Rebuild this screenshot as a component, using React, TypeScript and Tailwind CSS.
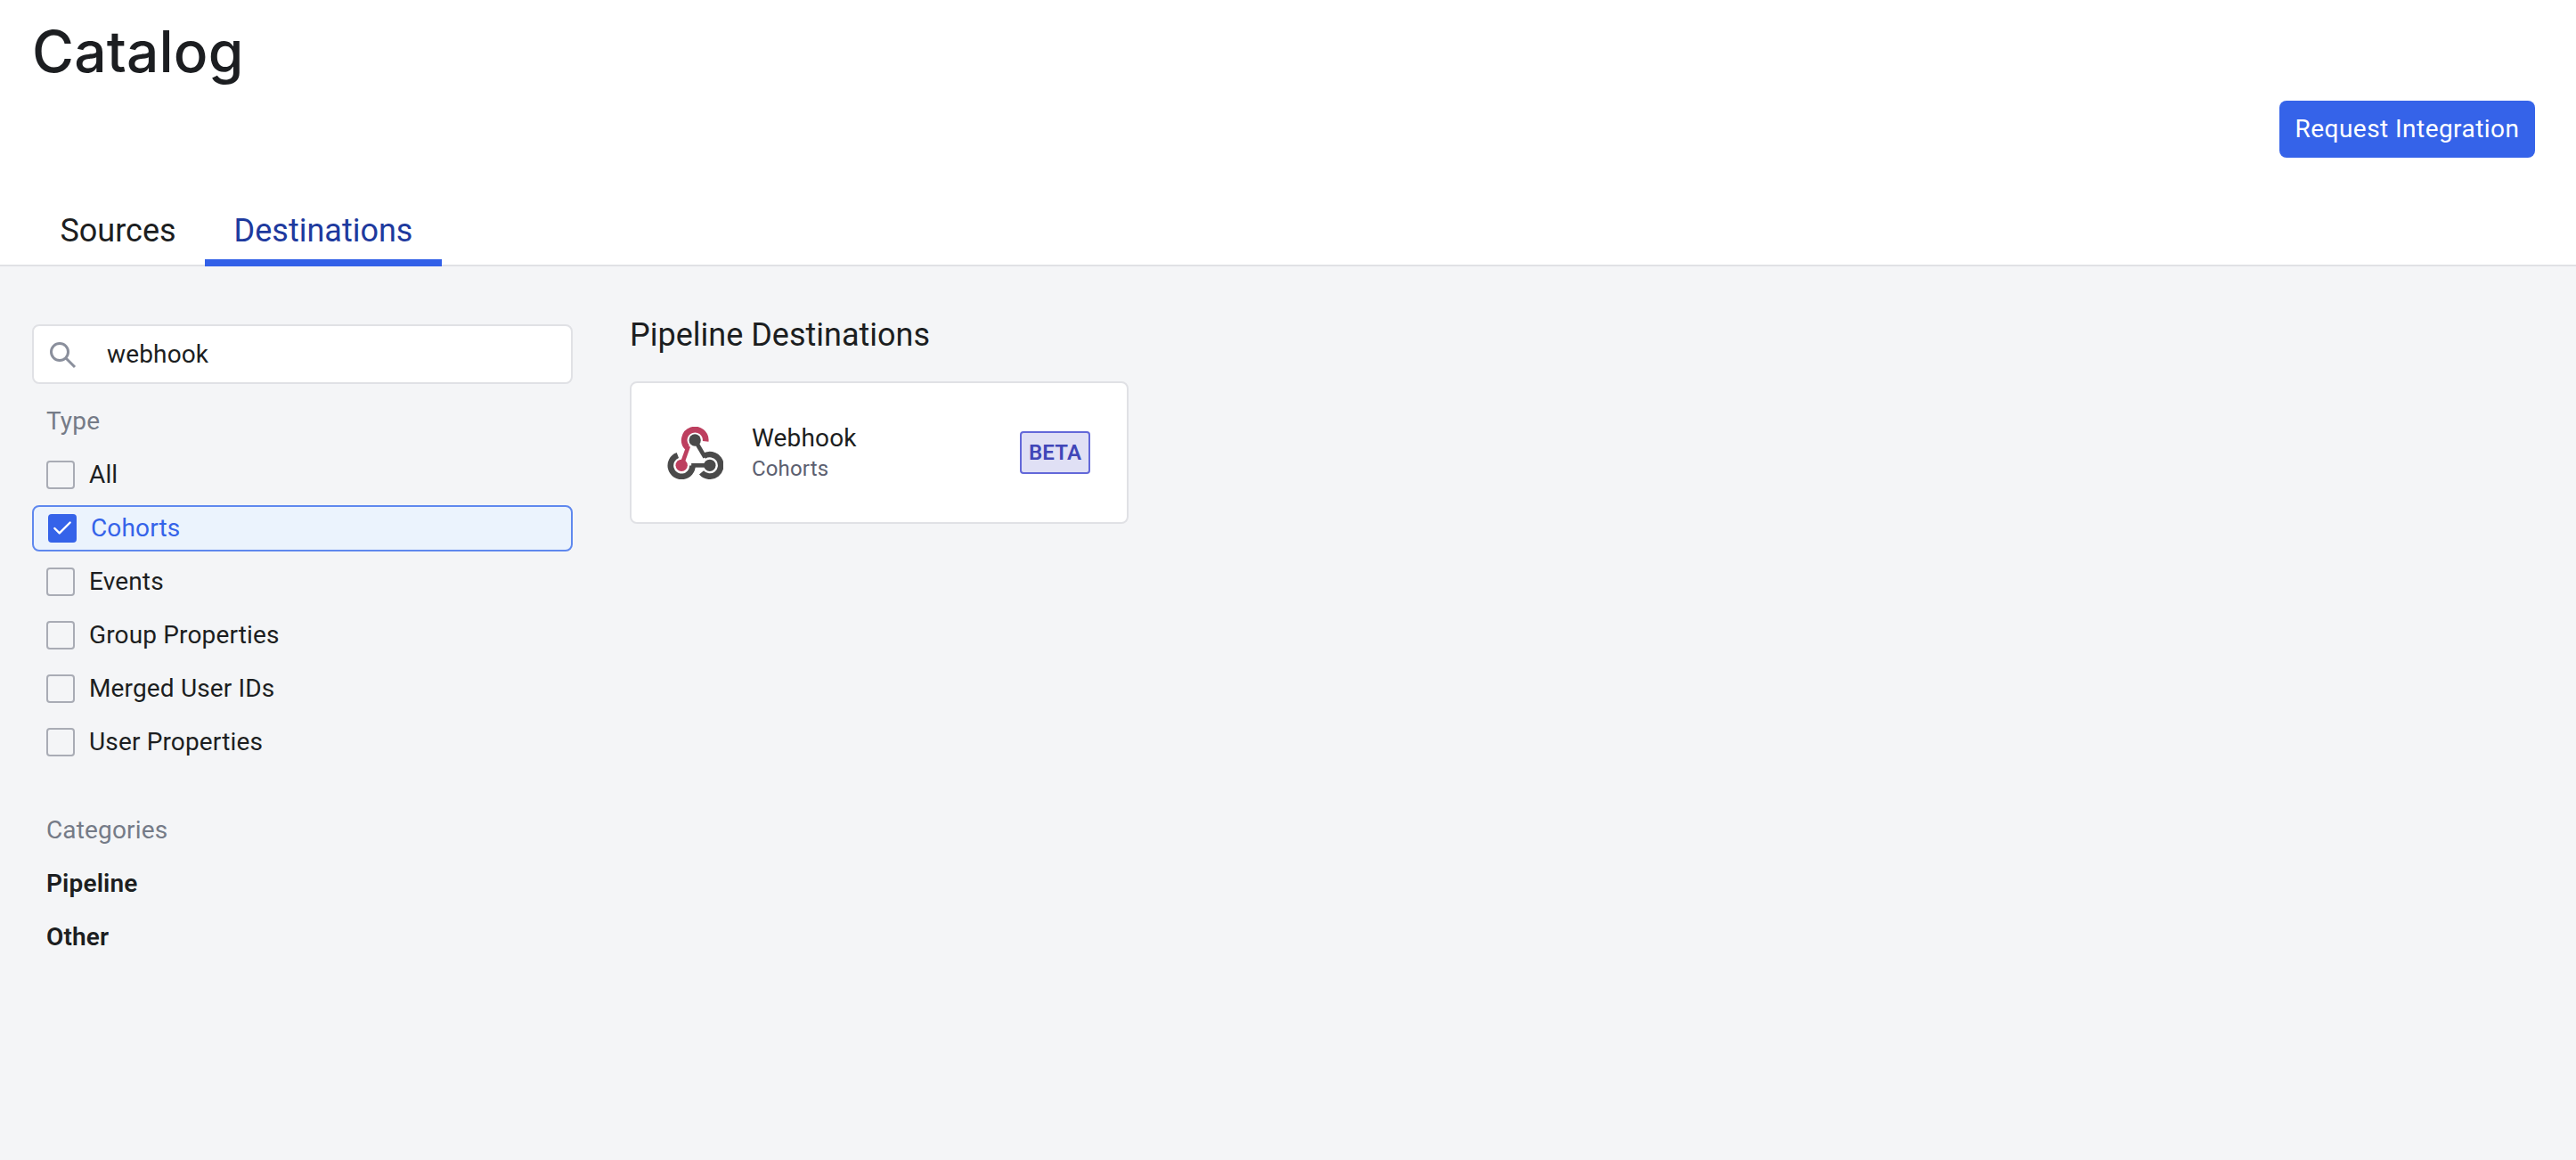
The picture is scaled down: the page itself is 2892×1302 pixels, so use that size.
import { Check } from "lucide-react"

const types = [
    { name: "All", checked: false },
    { name: "Cohorts", checked: true },
    { name: "Events", checked: false },
    { name: "Group Properties", checked: false },
    { name: "Merged User IDs", checked: false },
    { name: "User Properties", checked: false },
]

function WebhookLogo() {
    return (
        <svg width="63" height="59" viewBox="57 55 188 177" fill="none" strokeWidth="20">
            <path d="M186 104A36 36 0 1 0 124 125" stroke="#bd3f5f" />
            <path d="M128 120L105 185" stroke="#bd3f5f" strokeWidth="14" />
            <path d="M92 151A37 37 0 1 0 142 185" stroke="#4a4a4a" />
            <path d="M138 185L200 185" stroke="#4a4a4a" strokeWidth="14" />
            <path d="M172 209A37 37 0 1 0 180 154" stroke="#4a4a4a" />
            <path d="M184 158L150 100" stroke="#4a4a4a" strokeWidth="14" />
            <circle cx="150" cy="100" r="20" fill="#4a4a4a" />
            <circle cx="105" cy="185" r="20" fill="#bd3f5f" />
            <circle cx="200" cy="185" r="20" fill="#4a4a4a" />
        </svg>
    )
}

function TypeRow({ name, checked }: { name: string; checked: boolean }) {
    if (checked) {
        return (
            <div className="h-[60px] flex items-center">
                <div className="w-full h-[52px] flex items-center pl-[16px] gap-[16px] border-2 border-[#5f88ee] rounded-lg bg-[#ebf3fd] text-[#3563e9]">
                    <span className="w-8 h-8 rounded bg-[#3563e9] flex items-center justify-center">
                        <Check size={26} color="#ffffff" strokeWidth={2.25} />
                    </span>
                    {name}
                </div>
            </div>
        )
    }
    return (
        <div className="h-[60px] flex items-center pl-[16px] gap-[16px]">
            <span className="w-8 h-8 rounded border-2 border-[#a9acb5]" />
            {name}
        </div>
    )
}

export default function App() {
    return (
        <div className="h-[1302px] flex flex-col bg-[#f4f5f7] text-[#1c1e21] font-['Roboto',sans-serif] text-[28px] tracking-[0.15px]">
            <header className="h-[299px] flex flex-col bg-white border-b-2 border-[#e0e1e5]">
                <h1 className="pt-[26px] pl-[36px] text-[64px] leading-none font-medium tracking-[0.2px] font-['Inter',sans-serif]">Catalog</h1>
                <div className="flex justify-end pr-[46px] mt-[23px]">
                    <button type="button" className="h-16 w-[287px] rounded-lg bg-[#3563e9] text-white tracking-[0.45px]">
                        Request Integration
                    </button>
                </div>
                <nav className="flex mt-auto pl-[35px] -mb-[2px] text-[36px] tracking-normal">
                    <div className="h-[70px] w-[195px] pb-[10px] flex items-center justify-center">Sources</div>
                    <div className="h-[70px] w-[266px] pb-[2px] flex items-center justify-center text-[#1e3a9e] border-b-8 border-[#3260e8]">Destinations</div>
                </nav>
            </header>
            <div className="flex flex-1 pt-[65px] pl-[36px]">
                <aside className="w-[607px]">
                    <div className="h-[67px] flex items-center pl-[16px] gap-[34px] bg-white border-2 border-[#e0e1e5] rounded-lg">
                        <svg width="32" height="32" viewBox="0 0 32 32" fill="none" stroke="#8a8f9c" strokeWidth="3">
                            <circle cx="13" cy="13" r="9.5" />
                            <path d="M20 20L30 30" />
                        </svg>
                        webhook
                    </div>
                    <div className="mt-[12px] pl-[16px] h-[60px] flex items-center text-[#757b87]">Type</div>
                    {types.map(type => (
                        <TypeRow key={type.name} name={type.name} checked={type.checked} />
                    ))}
                    <div className="mt-[39px] pl-[16px] h-[60px] flex items-center text-[#757b87]">Categories</div>
                    <div className="pl-[16px] h-[60px] flex items-center font-semibold">Pipeline</div>
                    <div className="pl-[16px] h-[60px] flex items-center font-semibold">Other</div>
                </aside>
                <main className="ml-[64px]">
                    <h2 className="h-[20px] mt-[2px] flex items-center text-[36px] tracking-normal">Pipeline Destinations</h2>
                    <div className="mt-[42px] w-[560px] h-[160px] flex items-center pl-[40px] pr-[41px] bg-white border-2 border-[#e0e1e5] rounded-lg">
                        <WebhookLogo />
                        <div className="ml-[32px] flex-1 pt-[1px]">
                            <div className="leading-[34px]">Webhook</div>
                            <div className="leading-[34px] text-2xl text-[#5c6070]">Cohorts</div>
                        </div>
                        <span className="w-[79px] h-[48px] flex items-center justify-center rounded border-2 border-[#6368d9] bg-[#e0e0f5] text-[#4046b8] text-2xl font-semibold">BETA</span>
                    </div>
                </main>
            </div>
        </div>
    )
}
